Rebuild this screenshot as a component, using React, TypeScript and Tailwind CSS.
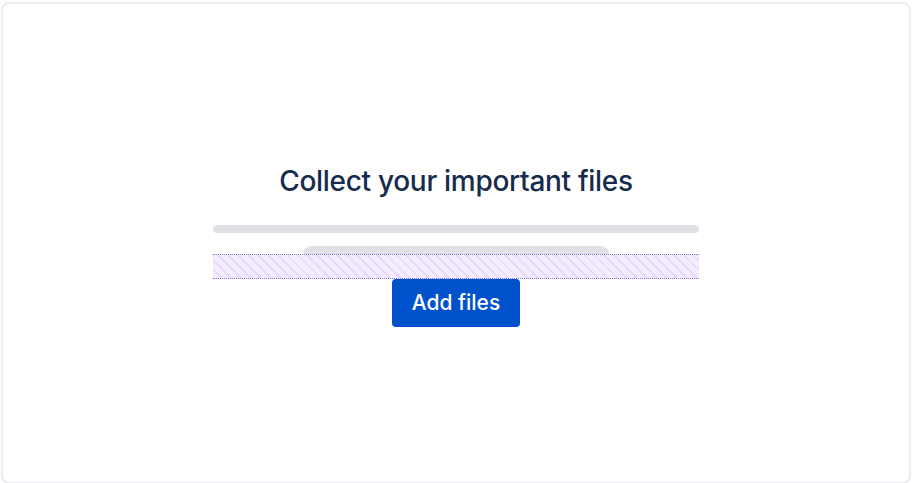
export default function App() {
  return (
    <div className="w-[912px] h-[483px] bg-white overflow-hidden pl-px pt-0.5" style={{ fontFamily: 'Inter, "Liberation Sans", sans-serif' }}>
      <div className="w-[910px] h-[482px] border-2 border-[#ebecf0] rounded-lg bg-white">
        <div className="w-[486px] mx-auto pt-[159px] flex flex-col items-center">
          <h1 className="text-[28px] leading-[36px] font-medium text-[#172b4d] tracking-[-0.3px]">
            Collect your important files
          </h1>
          <div className="mt-[26px] w-full h-2 rounded-full bg-[#dfe1e6]" />
          <div className="mt-[13px] w-[306px] h-2 rounded-t-full bg-[#dfe1e6]" />
          <div className="w-full h-[25px] border-y border-dotted border-[#8777d9] bg-[repeating-linear-gradient(45deg,#f3edff_0px,#f3edff_5px,#e6dbfc_5px,#e6dbfc_7px)]" />
          <button className="w-[128px] h-[48px] rounded-[4px] bg-[#0052cc] text-white text-[21px] font-medium">
            Add files
          </button>
        </div>
      </div>
    </div>
  );
}
